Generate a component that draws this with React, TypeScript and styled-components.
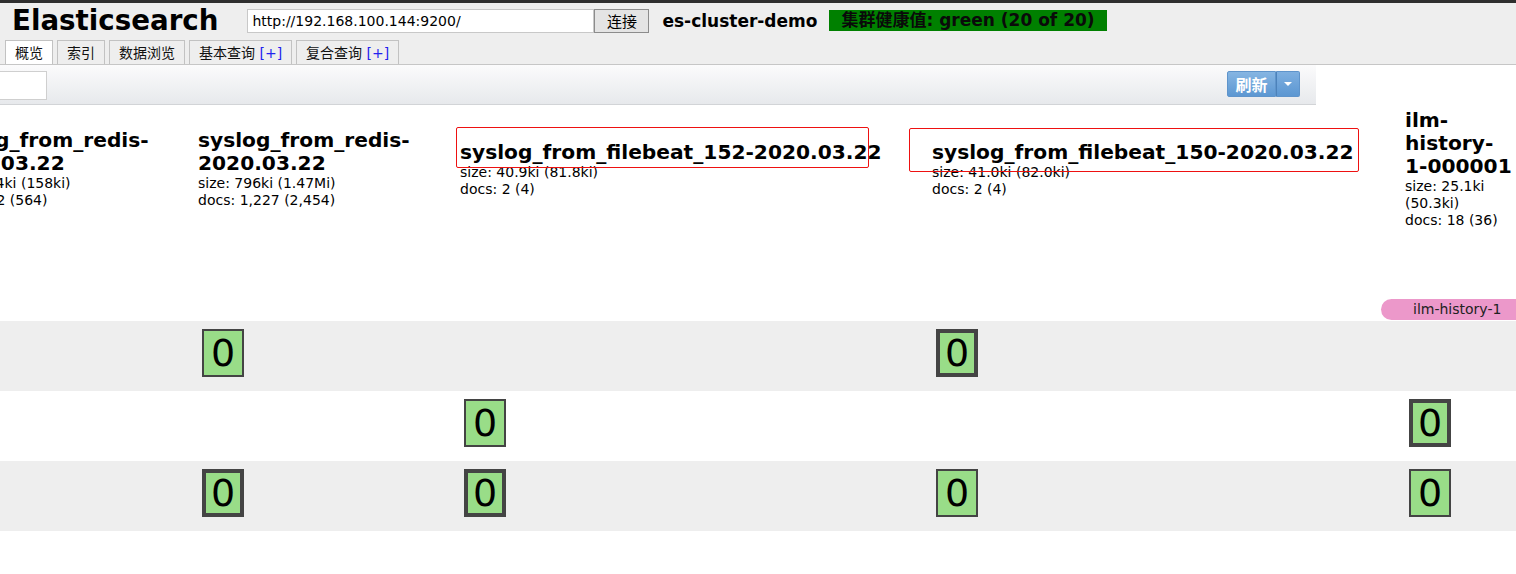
import React from "react";
import styled, { createGlobalStyle } from "styled-components";

//#region Style Definitions
const GlobalStyle = createGlobalStyle`
  html, body {
    margin: 0;
    padding: 0;
    background: #fff;
    overflow: hidden;
  }
  body {
    font-family: "DejaVu Sans", "Noto Sans CJK SC", sans-serif;
    font-size: 14px;
    color: #000;
  }
`;

const Page = styled.div`
  position: relative;
  width: 1516px;
  height: 574px;
  overflow: hidden;
`;

const Header = styled.header`
  background: #eeeeee;
  border-top: 3px solid #2e2e2e;
  border-bottom: 1px solid #c6c6c6;
`;

const TopRow = styled.div`
  display: flex;
  align-items: center;
  height: 35px;
  padding-left: 12px;
`;

const Brand = styled.h1`
  margin: 0;
  font-size: 27.7px;
  font-weight: bold;
  line-height: 1;
  color: #000;
`;

const UrlInput = styled.input`
  margin-left: 29px;
  width: 347px;
  height: 24px;
  box-sizing: border-box;
  border: 1px solid #c8c8c8;
  padding: 0 4px;
  font: 14px "DejaVu Sans", sans-serif;
  color: #000;
  background: #fff;
`;

const ConnectButton = styled.button`
  width: 55px;
  height: 24px;
  box-sizing: border-box;
  border: 1px solid #8c8c8c;
  background: #e4e4e4;
  font: 15px "Noto Sans CJK SC", sans-serif;
  color: #000;
  padding: 0;
`;

const ClusterName = styled.span`
  margin-left: 13px;
  font-size: 17px;
  font-weight: bold;
`;

const Health = styled.span<{ $color: string }>`
  margin-left: 12px;
  background: ${(p) => p.$color};
  height: 21px;
  line-height: 21px;
  padding: 0 12px;
  font-size: 17px;
  font-weight: bold;
  color: #0a0a0a;
  white-space: nowrap;
`;

const Tabs = styled.nav`
  display: flex;
  align-items: flex-end;
  gap: 4px;
  height: 24px;
  padding: 2px 0 0 5px;
`;

const Tab = styled.div<{ $active?: boolean }>`
  height: 24px;
  box-sizing: border-box;
  padding: 0 9px;
  border: 1px solid #c2c2c2;
  border-bottom: none;
  background: ${(p) => (p.$active ? "#fff" : "#eeeeee")};
  font-size: 14px;
  line-height: 24px;
  color: #111;
  white-space: nowrap;
`;

const Plus = styled.span`
  color: #2222ee;
`;

const Overview = styled.div`
  margin-left: -200px;
  width: 1725px;
`;

const Toolbar = styled.div`
  display: flex;
  align-items: center;
  width: 1516px;
  height: 39px;
  border-bottom: 1px solid #d2d4d7;
  background: linear-gradient(#fbfbfc, #e7e9ec);
`;

const FilterInput = styled.input`
  margin: 2px 0 0 47px;
  width: 200px;
  height: 29px;
  box-sizing: border-box;
  border: 1px solid #cfcfcf;
  background: #fff;
`;

const SplitButton = styled.div`
  display: flex;
  margin: 0 16px 2px auto;
`;

const RefreshButton = styled.button`
  height: 26px;
  width: 49px;
  padding: 0;
  border: 1px solid #5f94cb;
  border-radius: 2px 0 0 2px;
  background: linear-gradient(#86b5e2, #5c97d2);
  color: #fff;
  font: bold 16px "Noto Sans CJK SC", sans-serif;
`;

const CaretButton = styled.button`
  display: flex;
  align-items: center;
  justify-content: center;
  height: 26px;
  width: 24px;
  padding: 0;
  border: 1px solid #5f94cb;
  border-left: 1px solid #4c82ba;
  border-radius: 0 2px 2px 0;
  background: linear-gradient(#7eafe0, #5c97d2);
`;

const Caret = styled.span`
  width: 0;
  height: 0;
  border-left: 4px solid transparent;
  border-right: 4px solid transparent;
  border-top: 4px solid #fff;
`;

const Row = styled.div<{ $band?: boolean; $height: number }>`
  display: flex;
  height: ${(p) => p.$height}px;
  background: ${(p) => (p.$band ? "#eeeeee" : "transparent")};
`;

const HeaderRow = styled.div`
  display: flex;
  padding-bottom: 66px;
`;

const Cell = styled.div<{ $width: number }>`
  flex: 0 0 ${(p) => p.$width}px;
  width: ${(p) => p.$width}px;
  box-sizing: border-box;
`;

const HeaderCell = styled(Cell)`
  height: 128px;
  display: flex;
  flex-direction: column;
  justify-content: center;
  padding-right: 12px;
`;

const IndexName = styled.h2`
  margin: 0;
  font-size: 20.2px;
  font-weight: bold;
  line-height: 23px;
`;

const IndexStat = styled.div`
  font-size: 14px;
  line-height: 17px;
`;

const AliasPill = styled.div`
  margin-left: -24px;
  height: 21px;
  width: 200px;
  padding-left: 32px;
  box-sizing: border-box;
  border-radius: 11px 0 0 11px;
  background: #ec98ca;
  font-size: 14px;
  line-height: 21px;
  color: #222;
  white-space: nowrap;
`;

const Shard = styled.div<{ $primary?: boolean }>`
  margin: 8px 0 0 4px;
  width: 42px;
  height: 48px;
  box-sizing: border-box;
  border: ${(p) => (p.$primary ? 4 : 2)}px solid #444;
  background: #99dd88;
  display: flex;
  align-items: center;
  justify-content: center;
  font-size: 38px;
  line-height: 1;
`;

const Annotation = styled.div`
  position: absolute;
  border: 1px solid #ee1111;
  border-radius: 2px;
  pointer-events: none;
`;
//#endregion

const columns = [137, 261, 262, 472, 473, 120];

const indices = [
  { name: "syslog_from_redis-2020.03.22", size: "79.4ki (158ki)", docs: "282 (564)" },
  { name: "syslog_from_redis-2020.03.22", size: "796ki (1.47Mi)", docs: "1,227 (2,454)" },
  { name: "syslog_from_filebeat_152-2020.03.22", size: "40.9ki (81.8ki)", docs: "2 (4)" },
  { name: "syslog_from_filebeat_150-2020.03.22", size: "41.0ki (82.0ki)", docs: "2 (4)" },
  { name: "ilm-history-1-000001", size: "25.1ki (50.3ki)", docs: "18 (36)" },
];

// per node row: shard state per index column (null = none, true = primary)
const nodes: (boolean | null)[][] = [
  [null, false, null, true, null],
  [null, null, false, null, true],
  [null, true, true, false, false],
];

const tabs = ["概览", "索引", "数据浏览", "基本查询", "复合查询"];

export default function App() {
  return (
    <Page>
      <GlobalStyle />
      <Header>
        <TopRow>
          <Brand>Elasticsearch</Brand>
          <UrlInput defaultValue="http://192.168.100.144:9200/" />
          <ConnectButton>连接</ConnectButton>
          <ClusterName>es-cluster-demo</ClusterName>
          <Health $color="#008000">集群健康值: green (20 of 20)</Health>
        </TopRow>
        <Tabs>
          {tabs.map((t, i) => (
            <Tab key={t} $active={i === 0}>
              {t}
              {i > 2 && (
                <>
                  {" "}
                  <Plus>[+]</Plus>
                </>
              )}
            </Tab>
          ))}
        </Tabs>
      </Header>

      <Overview>
        <Toolbar>
          <FilterInput />
          <SplitButton>
            <RefreshButton>刷新</RefreshButton>
            <CaretButton>
              <Caret />
            </CaretButton>
          </SplitButton>
        </Toolbar>

        <HeaderRow>
          <HeaderCell $width={columns[0]} />
          {indices.map((idx, i) => (
            <HeaderCell key={i} $width={columns[i + 1]}>
              <IndexName>{idx.name}</IndexName>
              <IndexStat>size: {idx.size}</IndexStat>
              <IndexStat>docs: {idx.docs}</IndexStat>
            </HeaderCell>
          ))}
        </HeaderRow>

        <Row $height={22}>
          {columns.slice(0, 5).map((w, i) => (
            <Cell key={i} $width={w} />
          ))}
          <Cell $width={columns[5]}>
            <AliasPill>ilm-history-1</AliasPill>
          </Cell>
        </Row>

        {nodes.map((shards, r) => (
          <Row key={r} $height={70} $band={r % 2 === 0}>
            <Cell $width={columns[0]} />
            {shards.map((s, c) => (
              <Cell key={c} $width={columns[c + 1]}>
                {s !== null && <Shard $primary={s}>0</Shard>}
              </Cell>
            ))}
          </Row>
        ))}
      </Overview>

      <Annotation style={{ left: 456, top: 127, width: 411, height: 39 }} />
      <Annotation style={{ left: 909, top: 128, width: 448, height: 42 }} />
    </Page>
  );
}
